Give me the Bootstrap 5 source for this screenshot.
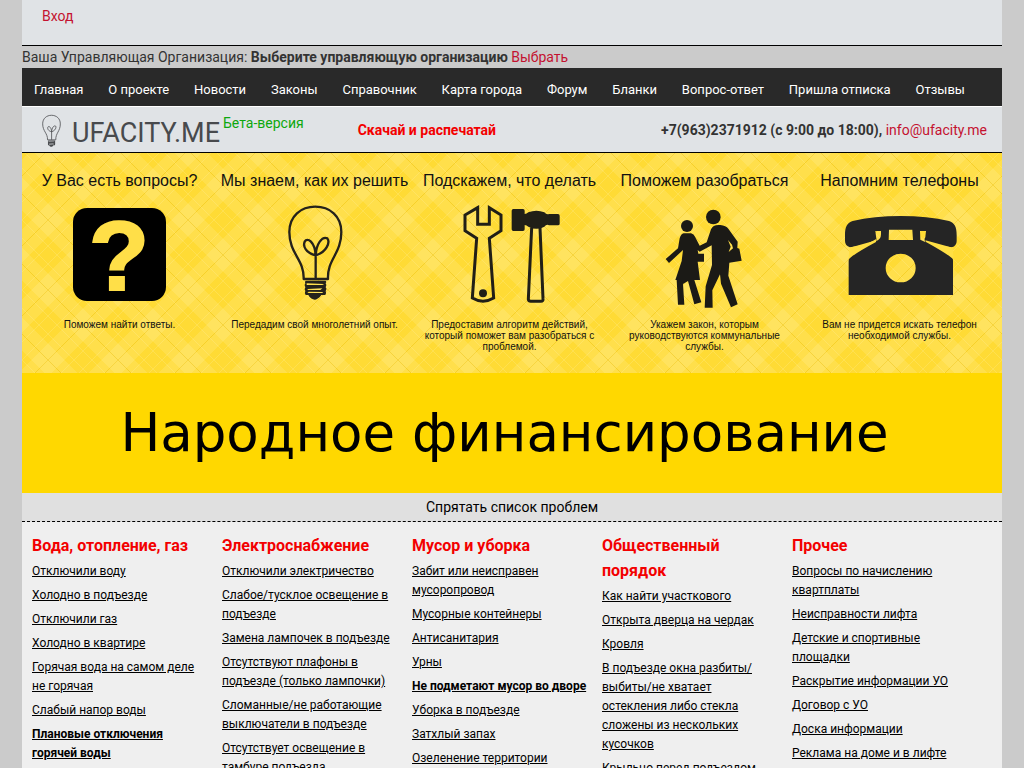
<!DOCTYPE html>
<html lang="ru">
<head>
<meta charset="utf-8">
<meta name="viewport" content="width=device-width, initial-scale=1">
<title>UFACITY.ME</title>
<link href="https://cdn.jsdelivr.net/npm/bootstrap@5.3.0/dist/css/bootstrap.min.css" rel="stylesheet">
<style>
body{background:#cbcbcb;color:#333;font:14px/22px Roboto,sans-serif}
a{color:#c41230;text-decoration:none}
.site{max-width:980px}
.bar{background:#e0e3e6;border-bottom:1px solid #000}
.login{min-height:46px;padding:5px 20px}
.site-menu{background:#292929;padding:11px 37px 5px 12px;font-size:13px}
.site-menu a{color:#fff}
.brandbar{border-top:1px solid #fff;min-height:47px;padding:0 15px 0 20px}
.brand-link{color:#484a4d;font-size:27px;line-height:32px;gap:11px;padding-top:6px}
.beta{color:#0da80d;margin:5px 54px 0 3px}
.print-link{color:#f30000}
.promo{padding:16px 5px 21px 0;color:#111;font-family:"Liberation Sans",Arial,sans-serif;
  background-color:#ffdb35;background-position:26px 67px;background-size:70px 70px;
  background-image:
  linear-gradient(45deg,#ffffff1c 0 12%,#0000 12% 18%,#fff2 18% 19%,#0000 19% 31%,#fff2 31% 32%,#0000 32% 38%,#ffffff1c 38% 49.5%,#d9a80038 49.5% 50.5%,#ffffff1c 50.5% 62%,#0000 62% 68%,#fff2 68% 69%,#0000 69% 81%,#fff2 81% 82%,#0000 82% 88%,#ffffff1c 88%),
  linear-gradient(135deg,#d9a80038 0 .5%,#ffffff1c .5% 12%,#0000 12% 18%,#fff2 18% 19%,#0000 19% 31%,#fff2 31% 32%,#0000 32% 38%,#ffffff1c 38% 49.5%,#d9a80038 49.5% 50.5%,#ffffff1c 50.5% 62%,#0000 62% 68%,#fff2 68% 69%,#0000 69% 81%,#fff2 81% 82%,#0000 82% 88%,#ffffff1c 88% 99.5%,#d9a80038 99.5%)}
.promo h2{font-size:16px;line-height:24px;margin:0 0 11px;white-space:nowrap}
.promo svg{display:block;margin:0 auto 9px}
.promo p{font-size:10px;line-height:11px;max-width:180px;min-height:33px;margin:0 auto}
.funding{background:#ffd800;color:#000;font:53px/120px "DejaVu Sans",sans-serif;padding-right:15px}
.toggle-list{background:#e0e0e0;color:#000;border:0;border-bottom:1px dashed #000;height:29px;padding:0;line-height:28px;font-size:14px}
.problems{background:#efefef;padding:11px 20px 30px 10px}
.problems section{padding-right:14px}
.problems h3{color:#f30000;font-size:16px;font-weight:700;line-height:25px;margin:0 0 4px}
.problems li{font-size:12px;line-height:19px;margin-bottom:5px}
.problems li a{color:#000;text-decoration:underline}
</style>
<script src="https://cdn.jsdelivr.net/npm/bootstrap@5.3.0/dist/js/bootstrap.bundle.min.js"></script>
</head>
<body>
<svg class="d-none">
<symbol id="bulb" viewBox="200 134 168 290">
<path d="M249 357C251 298 206 282 206 216C206 168 241 140 284 140S362 168 362 216C362 282 319 298 322 357Z" fill="none" stroke="currentColor" stroke-width="7" stroke-linejoin="round"/>
<path d="M285 357V286M285 286C256 279 246 259 252 245C260 230 283 246 285 286C287 251 304 228 320 235C329 247 318 276 285 286" fill="none" stroke="currentColor" stroke-width="7"/>
<path d="M255 362h60q4 4 0 8q5 6 0 12q5 5 0 11q3 6-1 12h-12c-7 10-15 14-20 14s-15-5-19-14h-8q-5-5-1-12q-4-5 0-11q-5-6 0-12q-3-4 1-8ZM258 370v5h48l4-3ZM261 387v3h38l6-5ZM260 399h46v-3l-42-1Z" fill="currentColor" fill-rule="evenodd"/>
</symbol>
</svg>
<div class="site container-fluid p-0">
<header>
<div class="bar login"><a href="#">Вход</a></div>
<div>Ваша Управляющая Организация: <b>Выберите управляющую организацию</b> <a href="#">Выбрать</a></div>
<nav class="site-menu d-flex flex-wrap justify-content-between">
<a href="#">Главная</a><a href="#">О проекте</a><a href="#">Новости</a><a href="#">Законы</a><a href="#">Справочник</a><a href="#">Карта города</a><a href="#">Форум</a><a href="#">Бланки</a><a href="#">Вопрос-ответ</a><a href="#">Пришла отписка</a><a href="#">Отзывы</a>
</nav>
<div class="bar brandbar d-flex flex-wrap">
<a href="#" class="brand-link d-flex align-items-center"><svg width="19" height="34" aria-hidden="true" class="mb-1"><use href="#bulb"/></svg>UFACITY.ME</a>
<span class="beta">Бета-версия</span>
<a href="#" class="print-link fw-bold align-self-center">Скачай и распечатай</a>
<span class="ms-auto align-self-center"><b>+7(963)2371912 (с 9:00 до 18:00),</b> <a href="mailto:info@ufacity.me">info@ufacity.me</a></span>
</div>
</header>
<main>
<div class="promo row g-0 row-cols-5 text-center">
<div class="col"><h2>У Вас есть вопросы?</h2>
<svg width="130" height="106" viewBox="0 0 130 106"><rect x="18" y="4" width="93" height="93" rx="14" fill="#000"/><text x="64" y="86" font-family="Liberation Sans" font-weight="700" font-size="99" text-anchor="middle" fill="#ffdf48" stroke="#ffdf48" stroke-width="2">?</text></svg>
<p>Поможем найти ответы.</p></div>
<div class="col"><h2>Мы знаем, как их решить</h2>
<svg width="130" height="106" viewBox="88 132 390 318"><use href="#bulb" x="200" y="134" width="168" height="290" color="#25221b"/></svg>
<p>Передадим свой многолетний опыт.</p></div>
<div class="col"><h2>Подскажем, что делать</h2>
<svg width="130" height="106" viewBox="73 132 390 318"><g fill="none" stroke="#211f17" stroke-width="9"><path d="M171 143L133 165V212L168 235L155 414Q187 433 219 414L206 235L241 212V165L206 143V193H171Z"/><path d="M333 203L323 418Q324 424 330 424H361Q368 424 367 416L358 203"/></g><g fill="#211f17"><circle cx="187" cy="400" r="12"/><path d="M278 147H307Q312 147 312 152V162Q318 162 323 157Q347 147 371 157Q378 165 385 162H412Q417 162 417 167V191Q417 196 412 196H385Q378 191 371 200Q347 213 323 200Q318 195 312 195V208Q312 213 307 213H278Q273 213 273 208V152Q273 147 278 147Z"/></g></svg>
<p>Предоставим алгоритм действий, который поможет вам разобраться с проблемой.</p></div>
<div class="col"><h2>Поможем разобраться</h2>
<svg width="130" height="106" viewBox="88 132 390 318" fill="#1b1a16"><circle cx="229" cy="198" r="18"/><circle cx="308" cy="171" r="22"/><path d="M219 220H241Q250 222 253 230L267 257L288 247L301 208Q307 193 329 195Q346 197 353 206L381 245L380 264L386 266L393 302L356 308L353 347L381 433L361 442L331 371L328 343L305 391L306 443H282L285 379L304 315L303 256L267 275L261 270L263 281H280V305H261L268 360H251L272 427L251 433L232 363L217 372L221 434H202L198 360H194L213 303L217 270L175 309L165 297L202 265L207 235Q211 222 219 220ZM352 240L360 260L354 276L367 265L364 254Z"/></svg>
<p>Укажем закон, которым руководствуются коммунальные службы.</p></div>
<div class="col"><h2>Напомним телефоны</h2>
<svg width="130" height="106" viewBox="73 132 390 318" fill="#252525" fill-rule="evenodd"><path d="M103 226C103 199 110 188 126 183Q190 168 270 168T415 183C431 188 438 199 438 226V244Q438 258 423 262L389 257C422 278 427 288 427 303V405H114V303C115 288 120 278 198 236L197 243C170 252 143 259 118 262Q103 257 103 243ZM194 213L197 236L196 244Q211 238 211 223V213ZM235 209L234 240H307L305 209ZM328 213L329 239Q337 243 345 247Q339 239 344 232L346 213ZM270 281A45 43 0 1 0 270 367A45 43 0 1 0 270 281Z"/><path d="M197 241L117 263L113 300Q120 287 196 246ZM344 241L426 263L429 300Q420 287 346 246Z" fill="#ffdf43"/></svg>
<p>Вам не придется искать телефон необходимой службы.</p></div>
</div>
<div class="funding text-center">Народное финансирование</div>
<button type="button" class="toggle-list d-block w-100">Спрятать список проблем</button>
<div class="problems row g-0 row-cols-5">
<section class="col"><h3>Вода, отопление, газ</h3><ul class="list-unstyled">
<li><a href="#">Отключили воду</a></li><li><a href="#">Холодно в подъезде</a></li><li><a href="#">Отключили газ</a></li><li><a href="#">Холодно в квартире</a></li><li><a href="#">Горячая вода на самом деле не горячая</a></li><li><a href="#">Слабый напор воды</a></li><li><a href="#" class="fw-bold">Плановые отключения<br>горячей воды</a></li></ul></section>
<section class="col"><h3>Электроснабжение</h3><ul class="list-unstyled">
<li><a href="#">Отключили электричество</a></li><li><a href="#">Слабое/тусклое освещение в подъезде</a></li><li><a href="#">Замена лампочек в подъезде</a></li><li><a href="#">Отсутствуют плафоны в подъезде (только лампочки)</a></li><li><a href="#">Сломанные/не работающие выключатели в подъезде</a></li><li><a href="#">Отсутствует освещение в тамбуре подъезда</a></li></ul></section>
<section class="col"><h3>Мусор и уборка</h3><ul class="list-unstyled">
<li><a href="#">Забит или неисправен мусоропровод</a></li><li><a href="#">Мусорные контейнеры</a></li><li><a href="#">Антисанитария</a></li><li><a href="#">Урны</a></li><li><a href="#" class="fw-bold">Не подметают мусор во дворе</a></li><li><a href="#">Уборка в подъезде</a></li><li><a href="#">Затхлый запах</a></li><li><a href="#">Озеленение территории</a></li></ul></section>
<section class="col"><h3>Общественный порядок</h3><ul class="list-unstyled">
<li><a href="#">Как найти участкового</a></li><li><a href="#">Открыта дверца на чердак</a></li><li><a href="#">Кровля</a></li><li><a href="#">В подъезде окна разбиты/<wbr>выбиты/не хватает остекления либо стекла сложены из нескольких кусочков</a></li><li><a href="#">Крыльцо перед подъездом</a></li></ul></section>
<section class="col"><h3>Прочее</h3><ul class="list-unstyled">
<li><a href="#">Вопросы по начислению квартплаты</a></li><li><a href="#">Неисправности лифта</a></li><li><a href="#">Детские и спортивные площадки</a></li><li><a href="#">Раскрытие информации УО</a></li><li><a href="#">Договор с УО</a></li><li><a href="#">Доска информации</a></li><li><a href="#">Реклама на доме и в лифте</a></li></ul></section>
</div>
</main>
</div>
</body>
</html>
